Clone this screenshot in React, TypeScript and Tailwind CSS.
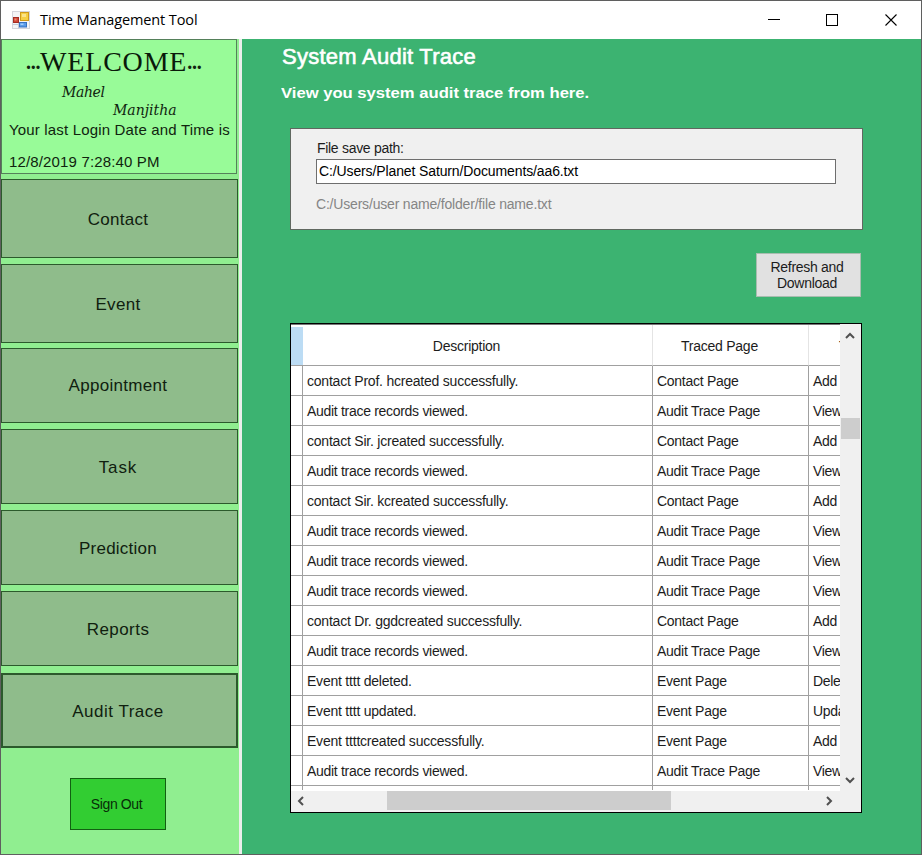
import type { ReactNode } from "react";

const navItems = [
  { label: "Contact", box: "h-[79px] mt-[5px] border pt-[2px]", text: "tracking-[0.25px]" },
  { label: "Event", box: "h-[79px] mt-[6px] border pt-[2px]", text: "tracking-[0.35px]" },
  { label: "Appointment", box: "h-[75px] mt-[5px] border", text: "tracking-[0.3px]" },
  { label: "Task", box: "h-[75px] mt-[6px] border pt-[2px]", text: "tracking-[0.9px]" },
  { label: "Prediction", box: "h-[75px] mt-[6px] border pt-[2px]", text: "tracking-[0.25px]" },
  { label: "Reports", box: "h-[75px] mt-[6px] border pt-[2px]", text: "tracking-[0.45px]" },
  { label: "Audit Trace", box: "h-[75px] mt-[7px] border-2 pt-[2px]", text: "tracking-[0.5px]" },
];

const rows = [
  ["contact Prof. hcreated successfully.", "Contact Page", "Add"],
  ["Audit trace records viewed.", "Audit Trace Page", "View"],
  ["contact Sir. jcreated successfully.", "Contact Page", "Add"],
  ["Audit trace records viewed.", "Audit Trace Page", "View"],
  ["contact Sir. kcreated successfully.", "Contact Page", "Add"],
  ["Audit trace records viewed.", "Audit Trace Page", "View"],
  ["Audit trace records viewed.", "Audit Trace Page", "View"],
  ["Audit trace records viewed.", "Audit Trace Page", "View"],
  ["contact Dr. ggdcreated successfully.", "Contact Page", "Add"],
  ["Audit trace records viewed.", "Audit Trace Page", "View"],
  ["Event tttt deleted.", "Event Page", "Delete"],
  ["Event tttt updated.", "Event Page", "Update"],
  ["Event ttttcreated successfully.", "Event Page", "Add"],
  ["Audit trace records viewed.", "Audit Trace Page", "View"],
];

function AppIcon() {
  return (
    <svg width="18" height="18" viewBox="0 0 18 18">
      <rect x="0.5" y="0.5" width="17" height="17" fill="#f4f4f6" stroke="#d5d5dc" />
      <path d="M6.5 10v7.5M0.5 13.5h7" stroke="#c5c9d8" />
      <rect x="8.5" y="1.5" width="8" height="8" fill="#f6cf45" stroke="#d09a1c" />
      <rect x="10" y="3" width="4" height="3" fill="#fbe38b" />
      <rect x="1.5" y="6.5" width="5" height="5" fill="#cf4534" stroke="#a52c24" />
      <rect x="2.5" y="7.5" width="2" height="2" fill="#ec8d79" />
      <rect x="7.5" y="11.5" width="7" height="4.5" fill="#5a9be8" stroke="#3971c1" />
      <rect x="8.5" y="12.5" width="3" height="1.5" fill="#a4cdfa" />
    </svg>
  );
}

function Chevron({ d, w, h }: { d: string; w: number; h: number }) {
  return (
    <svg width={w} height={h} viewBox={`0 0 ${w} ${h}`} fill="none" stroke="#505050" strokeWidth="2">
      <path d={d} />
    </svg>
  );
}

function GridCell({ className, children }: { className: string; children?: ReactNode }) {
  return (
    <div className={`flex shrink-0 items-center overflow-hidden whitespace-nowrap border-b border-[#a0a0a0] ${className}`}>
      {children}
    </div>
  );
}

function TitleBar() {
  return (
    <header className="flex h-[38px] shrink-0 items-center bg-white pl-[11px]">
      <AppIcon />
      <span className="ml-[10px] font-['Open_Sans',sans-serif] text-[14.5px] tracking-[-0.1px] text-black">
        Time Management Tool
      </span>
      <div className="ml-auto flex items-center pr-[23px]">
        <svg width="130" height="14" viewBox="0 0 130 14" fill="none" stroke="#000">
          <path d="M0 6.5h12" />
          <rect x="58.5" y="1.5" width="11" height="11" />
          <path d="M117.5 1.5l11 11M128.5 1.5l-11 11" strokeWidth="1.1" />
        </svg>
      </div>
    </header>
  );
}

function Sidebar() {
  return (
    <aside className="flex w-[238px] shrink-0 flex-col bg-[#90ee90]">
      <section className="h-[135px] w-[236px] shrink-0 border border-[#55805a] bg-[#98fb98] text-[#10240f]">
        <div className="mt-[4px] flex h-[36px] items-center pl-[24px] font-['Liberation_Serif',serif] text-[28px] leading-[36px] whitespace-nowrap">
          <span className="text-[20px] font-bold">...</span>
          <span className="tracking-[0.8px] text-[#0a1a0a]">WELCOME</span>
          <span className="text-[20px] font-bold">...</span>
        </div>
        <div className="mt-[3px] h-[18px] pl-[60px] font-['DejaVu_Serif',serif] text-[14px] leading-[18px] tracking-[-0.4px] italic">Mahel</div>
        <div className="h-[18px] pl-[111px] font-['DejaVu_Serif',serif] text-[14px] leading-[18px] tracking-[0px] italic">Manjitha</div>
        <div className="mt-[2px] h-[18px] pl-[7px] text-[15px] leading-[18px] tracking-[0.17px] whitespace-nowrap">Your last Login Date and Time is</div>
        <div className="mt-[14px] h-[18px] pl-[7px] text-[15px] leading-[18px] tracking-[0.15px] whitespace-nowrap">12/8/2019 7:28:40 PM</div>
      </section>
      {navItems.map((n) => (
        <button key={n.label} className={`flex w-[237px] shrink-0 items-center justify-center border-[#2c5a2c] bg-[#8fbc8b] pr-[3px] text-[17px] text-[#10200f] ${n.box}`}>
          <span className={n.text}>{n.label}</span>
        </button>
      ))}
      <button className="mt-[30px] ml-[69px] h-[52px] w-[96px] shrink-0 border border-[#126012] bg-[#32cd32] pr-[3px] text-[14px] tracking-[-0.4px] text-[#082c08]">
        Sign Out
      </button>
    </aside>
  );
}

function AuditGrid() {
  return (
    <section className="mt-[26px] ml-[48px] flex h-[490px] w-[572px] flex-col border border-black bg-[#f0f0f0]">
      <div className="flex h-[467px] shrink-0">
        <div className="h-[467px] w-[549px] shrink-0 overflow-hidden bg-white shadow-[inset_0_1px_0_#777]">
          <div className="flex h-[42px] pt-[1px]">
            <GridCell className="w-[12px] border-t-2 border-t-white bg-[#bcdcf4]" />
            <GridCell className="w-[350px] justify-center border-r border-r-[#e4e4e4] pt-[3px] pr-[22px] tracking-[-0.25px]">Description</GridCell>
            <GridCell className="w-[156px] justify-center border-r border-r-[#e4e4e4] pt-[3px] pr-[22px] tracking-[-0.25px]">Traced Page</GridCell>
            <GridCell className="w-[150px] pt-[3px] pl-[30px]">Type</GridCell>
          </div>
          {rows.map(([description, page, type], i) => (
            <div key={i} className="flex h-[30px]">
              <GridCell className="w-[12px] border-r border-r-[#a0a0a0]" />
              <GridCell className={`w-[350px] border-r border-r-[#a0a0a0] pt-[2px] pl-[4px] ${description.startsWith("Audit") ? "" : "tracking-[-0.22px]"}`}>{description}</GridCell>
              <GridCell className="w-[156px] border-r border-r-[#a0a0a0] pt-[2px] pl-[4px] tracking-[-0.27px]">{page}</GridCell>
              <GridCell className="w-[150px] pt-[2px] pl-[4px]">{type}</GridCell>
            </div>
          ))}
          <div className="flex h-[4px]">
            <div className="w-[12px] shrink-0 border-r border-[#a0a0a0]" />
            <div className="w-[350px] shrink-0 border-r border-[#a0a0a0]" />
            <div className="w-[156px] shrink-0 border-r border-[#a0a0a0]" />
          </div>
        </div>
        <div className="mt-[1px] ml-[1px] flex w-[19px] flex-col items-center">
          <div className="mt-[7px] mr-px h-[7px]"><Chevron w={10} h={7} d="M1 6l4-4 4 4" /></div>
          <div className="mt-[79px] h-[21px] w-[19px] bg-[#cdcdcd]" />
          <div className="mt-auto mr-px mb-[7px] h-[7px]"><Chevron w={10} h={7} d="M1 1l4 4 4-4" /></div>
        </div>
      </div>
      <div className="flex h-[19px] w-[549px] items-center">
        <div className="ml-[6px]"><Chevron w={7} h={10} d="M6 1L2 5l4 4" /></div>
        <div className="ml-[83px] h-[19px] w-[284px] bg-[#cdcdcd]" />
        <div className="mr-[7px] ml-auto"><Chevron w={7} h={10} d="M1 1l4 4-4 4" /></div>
      </div>
    </section>
  );
}

export default function App() {
  return (
    <div className="flex h-[855px] w-[922px] flex-col overflow-hidden border border-[#5f5f5f] bg-[#3cb371] font-['Liberation_Sans',Arial,sans-serif] text-[14px] tracking-[-0.3px] text-[#1c1c1c]">
      <TitleBar />
      <div className="flex min-h-0 flex-1">
        <Sidebar />
        <div className="w-[3px] shrink-0 bg-[#eceeec]" />
        <main className="flex flex-1 flex-col bg-[#3cb371]">
          <h1 className="mt-[5px] ml-[40px] h-[26px] text-[22px] leading-[26px] tracking-[0.25px] text-white [-webkit-text-stroke:0.6px_white]">System Audit Trace</h1>
          <p className="mt-[13px] ml-[39px] h-[20px] w-[300px] origin-left scale-x-[1.108] text-[15px] leading-[20px] font-bold tracking-normal whitespace-nowrap text-white">View you system audit trace from here.</p>
          <section className="mt-[25px] ml-[48px] h-[102px] w-[573px] shrink-0 border border-[#606860] bg-[#f0f0f0] pt-[10px] pl-[25px]">
            <label className="block h-[18px] pl-px leading-[18px]">File save path:</label>
            <div className="mt-[2px] flex h-[25px] w-[520px] items-center border border-[#6e6e6e] bg-white pl-[2px] tracking-[-0.12px] text-black">C:/Users/Planet Saturn/Documents/aa6.txt</div>
            <div className="mt-[11px] h-[18px] leading-[18px] tracking-[-0.19px] text-[#858585]">C:/Users/user name/folder/file name.txt</div>
          </section>
          <button className="mt-[23px] ml-[514px] h-[44px] w-[105px] shrink-0 border border-[#a9bdb0] bg-[#e1e1e1] pr-[3px] pb-px text-[14px] leading-[16px]">
            Refresh and
            <br />
            Download
          </button>
          <AuditGrid />
        </main>
      </div>
    </div>
  );
}
